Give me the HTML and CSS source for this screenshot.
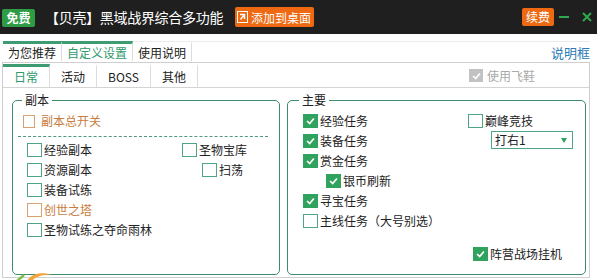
FILE: index.html
```html
<!DOCTYPE html>
<html lang="zh-CN">
<head>
    <meta charset="UTF-8">
    <title>黑域战界综合多功能</title>
    <link rel="stylesheet" href="styles.css">
</head>
<body>
    <div class="titlebar">
        <span class="badge">免费</span>
        <span class="title">【贝壳】黑域战界综合多功能</span>
        <span class="btn-add">
            <svg class="add-icon" width="11" height="12" viewBox="0 0 11 12">
                <rect x="0.5" y="0.5" width="10" height="11" fill="none" stroke="#fff"/>
                <path d="M3 3.5 L7.5 3.5 L7.5 8 M7.5 3.5 L3.5 8.5" fill="none" stroke="#fff" stroke-width="1.4"/>
            </svg>添加到桌面</span>
        <span class="renew">续费</span>
        <span class="win-min"></span>
        <svg class="win-close" width="10" height="10" viewBox="0 0 10 10">
            <path d="M1 1 L9 9 M9 1 L1 9" stroke="#2fa84f" stroke-width="2"/>
        </svg>
    </div>

    <div class="page">
        <div class="tabs-top">
            <span class="tab bar">为您推荐</span>
            <span class="tab bar active">自定义设置</span>
            <span class="tab">使用说明</span>
            <a class="help">说明框</a>
        </div>

        <div class="frame">
            <div class="tabs-sub">
                <span class="tab2 active">日常</span>
                <span class="tab2">活动</span>
                <span class="tab2">BOSS</span>
                <span class="tab2">其他</span>
                <label class="chk fly"><span class="box grey"><svg viewBox="0 0 14 14"><path d="M3 7 L6 10 L11 4"/></svg></span>使用飞鞋</label>
            </div>

            <div class="content">
                <fieldset class="group group-left">
                    <legend>副本</legend>
                    <label class="chk orange master"><span class="box"></span>副本总开关</label>
                    <div class="dash"></div>
                    <div class="row">
                        <label class="chk w155"><span class="box"></span>经验副本</label>
                        <label class="chk"><span class="box"></span>圣物宝库</label>
                    </div>
                    <div class="row">
                        <label class="chk w175"><span class="box"></span>资源副本</label>
                        <label class="chk"><span class="box"></span>扫荡</label>
                    </div>
                    <div class="row"><label class="chk"><span class="box"></span>装备试练</label></div>
                    <div class="row"><label class="chk orange"><span class="box"></span>创世之塔</label></div>
                    <div class="row"><label class="chk"><span class="box"></span>圣物试练之夺命雨林</label></div>
                </fieldset>

                <fieldset class="group group-right">
                    <legend>主要</legend>
                    <div class="cols">
                        <div class="col-a">
                            <div class="row"><label class="chk"><span class="box on"><svg viewBox="0 0 14 14"><path d="M3 7 L6 10 L11 4"/></svg></span>经验任务</label></div>
                            <div class="row"><label class="chk"><span class="box on"><svg viewBox="0 0 14 14"><path d="M3 7 L6 10 L11 4"/></svg></span>装备任务</label></div>
                            <div class="row"><label class="chk"><span class="box on"><svg viewBox="0 0 14 14"><path d="M3 7 L6 10 L11 4"/></svg></span>赏金任务</label></div>
                            <div class="row sub"><label class="chk"><span class="box on"><svg viewBox="0 0 14 14"><path d="M3 7 L6 10 L11 4"/></svg></span>银币刷新</label></div>
                            <div class="row"><label class="chk"><span class="box on"><svg viewBox="0 0 14 14"><path d="M3 7 L6 10 L11 4"/></svg></span>寻宝任务</label></div>
                            <div class="row"><label class="chk"><span class="box"></span>主线任务（大号别选）</label></div>
                        </div>
                        <div class="col-b">
                            <label class="chk"><span class="box"></span>巅峰竞技</label>
                            <div class="select">打右1<span class="arrow"></span></div>
                        </div>
                    </div>
                    <div class="row-end">
                        <label class="chk"><span class="box on"><svg viewBox="0 0 14 14"><path d="M3 7 L6 10 L11 4"/></svg></span>阵营战场挂机</label>
                    </div>
                </fieldset>
            </div>
        </div>
    </div>

    <svg class="corner-logo" width="40" height="10" viewBox="0 0 40 10">
        <path d="M2 10 L9 4" stroke="#7cc043" stroke-width="2.5"/>
        <path d="M12 10 C16 3 26 0 37 4 C28 3 20 6 17 10 Z" fill="#f5a23a"/>
    </svg>
</body>
</html>
```

FILE: styles.css
```css
body {
    margin: 0;
    width: 597px;
    height: 280px;
    overflow: hidden;
    position: relative;
    background: #ffffff;
    font-family: "Noto Sans CJK SC", sans-serif;
    font-size: 12px;
    color: #222;
}

/* Title bar */
.titlebar {
    height: 34px;
    background: #1f1f1f;
    display: flex;
    align-items: center;
    padding: 0 5px 0 2px;
    color: #fff;
}

.badge {
    width: 33px;
    height: 18px;
    line-height: 18px;
    text-align: center;
    background: #2e9c44;
    border-radius: 2px;
    font-size: 12px;
    font-weight: bold;
    margin-top: 2px;
}

.title {
    margin-left: 10px;
    font-size: 14px;
    letter-spacing: -0.3px;
}

.btn-add {
    margin-left: 12px;
    height: 20px;
    display: flex;
    align-items: center;
    gap: 3px;
    padding: 0 3px 0 2px;
    background: #ee6912;
    border-radius: 2px;
    font-size: 12px;
}

.renew {
    margin-left: auto;
    width: 32px;
    height: 18px;
    line-height: 18px;
    text-align: center;
    background: #ee6912;
    border-radius: 2px;
    font-size: 12px;
}

.win-min {
    width: 10px;
    height: 2px;
    margin-left: 5px;
    background: #2fa84f;
}

.win-close {
    margin-left: 13px;
}

/* Page */
.page {
    padding: 0 7px 0 2px;
}

.tabs-top {
    margin-top: 7px;
    height: 21px;
    display: flex;
    padding-left: 1px;
    border-top: 1px solid #ececec;
    box-sizing: border-box;
}

.tab {
    height: 17px;
    line-height: 18px;
    padding: 0 5px;
    border-top: 3px solid transparent;
    border-right: 1px solid #dcdcdc;
    margin-top: -1px;
}

.tab.bar {
    border-top-color: #3e9c72;
}

.tab.active {
    color: #2e9a6c;
}

.help {
    margin-left: auto;
    font-size: 13px;
    line-height: 18px;
    margin-top: 2px;
    color: #2c7bb6;
}

.frame {
    height: 216px;
    box-sizing: border-box;
    border: 1px solid #cfcfcf;
}

.tabs-sub {
    display: flex;
    align-items: center;
    margin-top: 1px;
    height: 24px;
    box-sizing: border-box;
    border-bottom: 1px solid #d4d4d4;
}

.tab2 {
    height: 20px;
    line-height: 20px;
    padding: 0 11px;
    border-top: 3px solid transparent;
    border-right: 1px solid #dcdcdc;
    align-self: flex-start;
}

.tab2.active {
    border-top-color: #3e9c72;
    color: #2e9a6c;
}

.fly {
    margin-left: auto;
    margin-right: 54px;
    color: #a9a9a9;
}

/* Content */
.content {
    display: flex;
    gap: 7px;
    padding: 5px 3px 0 9px;
}

.group {
    margin: 0;
    height: 182px;
    box-sizing: border-box;
    border: 1px solid #3d8b6c;
    border-radius: 5px;
    padding: 7px 0 0 0;
}

.group legend {
    padding: 0 3px;
    line-height: 14px;
    font-size: 12px;
}

.group-left {
    width: 268px;
}

.group-left legend {
    margin-left: 9px;
}

.group-right {
    flex: 1;
}

.group-right legend {
    margin-left: 11px;
}

/* Checkboxes */
.chk {
    display: flex;
    align-items: center;
    height: 14px;
    line-height: 14px;
    white-space: nowrap;
}

.box {
    width: 15px;
    height: 14px;
    box-sizing: border-box;
    border: 1px solid #4ba586;
    margin-right: 2px;
    flex-shrink: 0;
}

.box svg {
    display: block;
    width: 13px;
    height: 12px;
}

.box path {
    fill: none;
    stroke: #fff;
    stroke-width: 2;
}

.box.on {
    background: #2fa35e;
    border-color: #2fa35e;
}

.box.grey {
    width: 14px;
    height: 13px;
    background: #c2c2c2;
    border-color: #c2c2c2;
    margin-right: 4px;
}

.chk.orange {
    color: #c97c3c;
}

.chk.orange .box {
    border-color: #d9a070;
}

.master {
    margin-left: 10px;
}

.master .box {
    width: 12px;
    height: 13px;
    margin-right: 6px;
}

.dash {
    margin: 8px 11px 6px 5px;
    border-top: 1px dashed #4f9a7c;
}

.row {
    display: flex;
    margin-bottom: 6px;
}

.group-left .row {
    margin-left: 14px;
}

.w155 {
    width: 155px;
}

.w175 {
    width: 175px;
}

.cols {
    display: flex;
}

.col-a {
    width: 165px;
    padding-left: 15px;
}

.sub {
    margin-left: 23px;
}

.select {
    margin: 3px 0 0 23px;
    width: 82px;
    height: 18px;
    box-sizing: border-box;
    border: 1px solid #4ba586;
    padding-left: 3px;
    line-height: 16px;
    position: relative;
}

.arrow {
    position: absolute;
    right: 5px;
    top: 6px;
    border-left: 3.5px solid transparent;
    border-right: 3.5px solid transparent;
    border-top: 5px solid #2fa35e;
}

.row-end {
    margin-top: 13px;
    padding-left: 185px;
}

.corner-logo {
    position: absolute;
    left: 15px;
    top: 271px;
}
```
